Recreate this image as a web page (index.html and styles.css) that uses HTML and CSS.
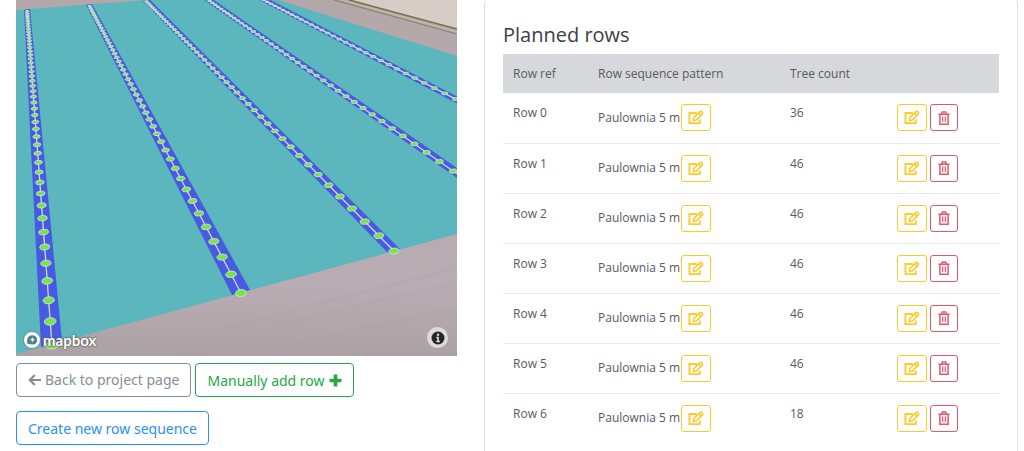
FILE: index.html
```html
<!DOCTYPE html>
<html lang="en">
<head>
<meta charset="UTF-8">
<meta name="viewport" content="width=device-width, initial-scale=1.0">
<title>Planned rows</title>
<link rel="stylesheet" href="styles.css">
</head>
<body>

<!-- shared icons -->
<svg class="icon-defs" aria-hidden="true">
    <symbol id="icon-edit" viewBox="0 0 16 15">
        <path d="M8.800 3H1.400v10.200h10.400V9.400" fill="none" stroke="currentColor" stroke-width="1.800"/>
        <path d="M5.400 10.500l.4-2.900 6-6a1.200 1.200 0 0 1 1.700 0l.8.8a1.200 1.200 0 0 1 0 1.700l-6 6zM10.800 2.900l2.300 2.300" fill="none" stroke="currentColor" stroke-width="1.500"/>
    </symbol>
    <symbol id="icon-trash" viewBox="0 0 12 14">
        <path d="M.5 3.200h11M3.600 3l.8-1.900h3.200L8.400 3M1.900 3.500v9.700h8.200V3.500" fill="none" stroke="currentColor" stroke-width="1.500"/>
        <path d="M4.700 5.500v5.600M7.300 5.500v5.600" fill="none" stroke="currentColor" stroke-width="1.200"/>
    </symbol>
</svg>

<div class="page">
    <div class="left">
        <div class="map">
            <svg class="map-view" viewBox="0 0 441 356" role="img" aria-label="Map of planned rows">
                <defs>
                    <linearGradient id="ground" x1="0" y1="0" x2="0" y2="1">
                        <stop offset="0" stop-color="#b3a7a9"/>
                        <stop offset=".8" stop-color="#b9adb3"/>
                        <stop offset="1" stop-color="#aca1a4"/>
                    </linearGradient>
                </defs>
                <rect width="441" height="356" fill="url(#ground)"/>
                <polygon points="333,0 441,0 441,29" fill="#d8cdc6"/>
                <path d="M333 0L441 29" stroke="#77704f" stroke-width="1.6"/>
                <path d="M326 0L441 32" stroke="#bfb9a5" stroke-width="1.6"/>
                <path d="M318 0L441 34" stroke="#88836b" stroke-width="1.2"/>
                <path d="M262 325L441 282M190 333L441 268M250 350L441 308" stroke="#ada2a6" stroke-width="3" opacity=".25"/>
                <polygon points="0,10 131,0 262,0 441,56 441,234 0,354" fill="#5bb6be"/>
                <g fill="#465be0">
                    <polygon points="8,10 14,9 46,341 25,347"/>
                    <polygon points="70,5 76,4 234,290 216,295"/>
                    <polygon points="127,1 134,0 384,249 371,252"/>
                    <polygon points="184,-3 192,-4 444,170 444,180"/>
                    <polygon points="230,-7 239,-8 444,98 444,105"/>
                </g>
                <g id="trees"></g>
            </svg>
            <a class="map-logo" href="#">
                <svg width="18" height="18" viewBox="0 0 18 18">
                    <circle cx="9" cy="9" r="8.500" fill="#fff" stroke="#5c7b7e" stroke-width=".8"/>
                    <path d="M4.300 13.700c-.5-3-.2-5.300 1.400-7.100a4.900 4.900 0 0 1 7 7c-1.600 1.600-5.400.7-8.400.1z" transform="translate(0 -1)" fill="#4d8588"/>
                    <path d="M9.500 6.200l.8 1.700 1.700.8-1.700.8-.8 1.700-.8-1.700-1.700-.8 1.700-.8z" fill="#fff"/>
                </svg>
                <span>mapbox</span>
            </a>
            <button class="map-info" type="button" aria-label="Attribution">
                <svg width="14" height="14" viewBox="0 0 14 14">
                    <circle cx="7" cy="7" r="6.500" fill="#262626"/>
                    <circle cx="7" cy="3.700" r="1.200" fill="#ddd"/>
                    <path d="M5.300 5.800h2.600v4h1v1.400H5.200V9.800h1V7.100h-.9z" fill="#ddd"/>
                </svg>
            </button>
        </div>

        <div class="actions">
            <a class="btn btn-secondary" href="#">
                <svg width="13" height="12" viewBox="0 0 13 12"><path d="M6.800 1L1.800 6l5 5M2 6h11" fill="none" stroke="currentColor" stroke-width="2.200"/></svg>
                Back to project page
            </a>
            <button class="btn btn-success" type="button">
                Manually add row
                <svg width="13" height="13" viewBox="0 0 13 13"><path d="M6.500 .5v12M.5 6.500h12" stroke="currentColor" stroke-width="3.600"/></svg>
            </button>
        </div>
        <div class="actions actions-sequence">
            <button class="btn btn-primary" type="button">Create new row sequence</button>
        </div>
    </div>

    <div class="card">
        <h2>Planned rows</h2>
        <table>
            <thead>
                <tr>
                    <th class="col-ref">Row ref</th>
                    <th class="col-pattern">Row sequence pattern</th>
                    <th class="col-count">Tree count</th>
                    <th class="col-actions"></th>
                </tr>
            </thead>
            <tbody id="rows"></tbody>
        </table>
    </div>
</div>

<script src="rows.js"></script>
</body>
</html>
```
FILE: styles.css
```css
* {
    box-sizing: border-box;
}
body {
    margin: 0;
    background-color: #fff;
    color: #555a5f;
    font-family: "Open Sans", sans-serif;
    font-size: 12px;
    line-height: 18px;
}
button {
    font-family: inherit;
    cursor: pointer;
}
svg {
    display: block;
}
.icon-defs {
    display: none;
}
.page {
    display: grid;
    grid-template-columns: 441fr 534fr;
    gap: 27px;
    padding: 0 6px 0 16px;
}

/* map */
.map {
    position: relative;
}
.map-view {
    width: 100%;
}
.map-logo {
    position: absolute;
    left: 7px;
    bottom: 7px;
    display: flex;
    align-items: center;
    gap: 2px;
    color: #fff;
    font-family: Lato, sans-serif;
    font-size: 15px;
    font-weight: bold;
    text-decoration: none;
    text-shadow: 0 0 1px #555, 0 0 2px #666, 0 0 2px #666;
}
.map-info {
    position: absolute;
    right: 9px;
    bottom: 8px;
    display: flex;
    align-items: center;
    justify-content: center;
    width: 21px;
    height: 21px;
    padding: 0;
    border: none;
    border-radius: 50%;
    background-color: #dfdadc;
}

/* buttons */
.actions {
    display: flex;
    gap: 4px;
    margin-top: 7px;
}
.actions-sequence {
    margin-top: 14px;
}
.btn {
    display: flex;
    align-items: center;
    gap: 4px;
    height: 34px;
    padding: 0 11px;
    border: 1px solid;
    border-radius: 4px;
    background-color: #fff;
    font-family: "Noto Sans", sans-serif;
    font-size: 14px;
    text-decoration: none;
    white-space: nowrap;
}
.btn-secondary {
    color: #868e96;
}
.btn-success {
    color: #28a745;
}
.btn-primary {
    color: #2a8ff7;
}
.btn-icon {
    display: inline-flex;
    align-items: center;
    justify-content: center;
    width: 30px;
    height: 27px;
    padding: 0;
    border: 1px solid;
    border-radius: 3px;
    background-color: #fff;
}
.btn-edit {
    color: #ffc928;
}
.btn-delete {
    width: 28px;
    color: #e2566a;
}

/* planned rows */
.card {
    padding: 20px 18px;
    border: 1px solid #e2e2e2;
    border-top: none;
    border-radius: 4px;
}
h2 {
    margin: 0 0 4px;
    color: #3b4045;
    font-size: 20px;
    font-weight: normal;
    line-height: 30px;
}
table {
    width: 100%;
    border-collapse: collapse;
    table-layout: fixed;
}
th {
    height: 39px;
    padding: 0 10px;
    background-color: #d6d8db;
    font-weight: normal;
    text-align: left;
}
td {
    height: 50px;
    padding: 11px 10px 0;
    border-bottom: 1px solid #e6e8ea;
    vertical-align: top;
}
tbody tr:last-child td {
    border-bottom: none;
}
.col-ref {
    width: 85px;
}
.col-pattern {
    width: 192px;
}
.col-count {
    width: 107px;
}
.cell-group {
    display: flex;
    align-items: center;
    gap: 3px;
    white-space: nowrap;
}
.pattern {
    gap: 1px;
}
```
FILE: rows.js
```javascript
const rows = [
    { name: 'Row 0', trees: 36 },
    { name: 'Row 1', trees: 46 },
    { name: 'Row 2', trees: 46 },
    { name: 'Row 3', trees: 46 },
    { name: 'Row 4', trees: 46 },
    { name: 'Row 5', trees: 46 },
    { name: 'Row 6', trees: 18 }
];

const editButton = '<button class="btn-icon btn-edit" type="button" aria-label="Edit"><svg width="16" height="15"><use href="#icon-edit"/></svg></button>';
const deleteButton = '<button class="btn-icon btn-delete" type="button" aria-label="Delete"><svg width="12" height="14"><use href="#icon-trash"/></svg></button>';

document.getElementById('rows').innerHTML = rows.map(row => `
    <tr>
        <td>${row.name}</td>
        <td><div class="cell-group pattern">Paulownia 5 m ${editButton}</div></td>
        <td>${row.trees}</td>
        <td><div class="cell-group">${editButton}${deleteButton}</div></td>
    </tr>`).join('');

// near and far end of each lane on the map
const lanes = [
    { near: [36, 345], far: [11, 10] },
    { near: [225, 293], far: [73, 5] },
    { near: [378, 251], far: [130, 1] },
    { near: [503, 217], far: [188, -3] },
    { near: [610, 187], far: [234, -7] }
];
const horizon = -132;
const treesPerLane = 46;

function laneTrees(lane) {
    const [x1, y1] = lane.near;
    const [x2, y2] = lane.far;
    const depth = y1 - horizon;
    let svg = `<path d="M${x1} ${y1}L${x2} ${y2}" stroke="#d9d5f0" stroke-width="1.3"/>`;

    // trees get closer together towards the horizon
    for (let i = treesPerLane - 1; i >= 0; i--) {
        const d = depth / (1 + depth * 0.0001084 * i);
        const y = horizon + d;
        const x = x1 + (x2 - x1) * (y1 - y) / (y1 - y2);
        const scale = d / 477;
        const rx = 6.2 * Math.pow(scale, 0.9);
        const ry = 4 * Math.pow(scale, 1.4);
        svg += `<ellipse cx="${x.toFixed(1)}" cy="${y.toFixed(1)}" rx="${rx.toFixed(1)}" ry="${ry.toFixed(1)}" transform="rotate(-6 ${x.toFixed(1)} ${y.toFixed(1)})"/>`;
    }
    return svg;
}

const trees = document.getElementById('trees');
trees.setAttribute('fill', '#79e34b');
trees.setAttribute('stroke', '#d3e4e2');
trees.setAttribute('stroke-width', '.8');
trees.innerHTML = lanes.map(laneTrees).join('');
```
